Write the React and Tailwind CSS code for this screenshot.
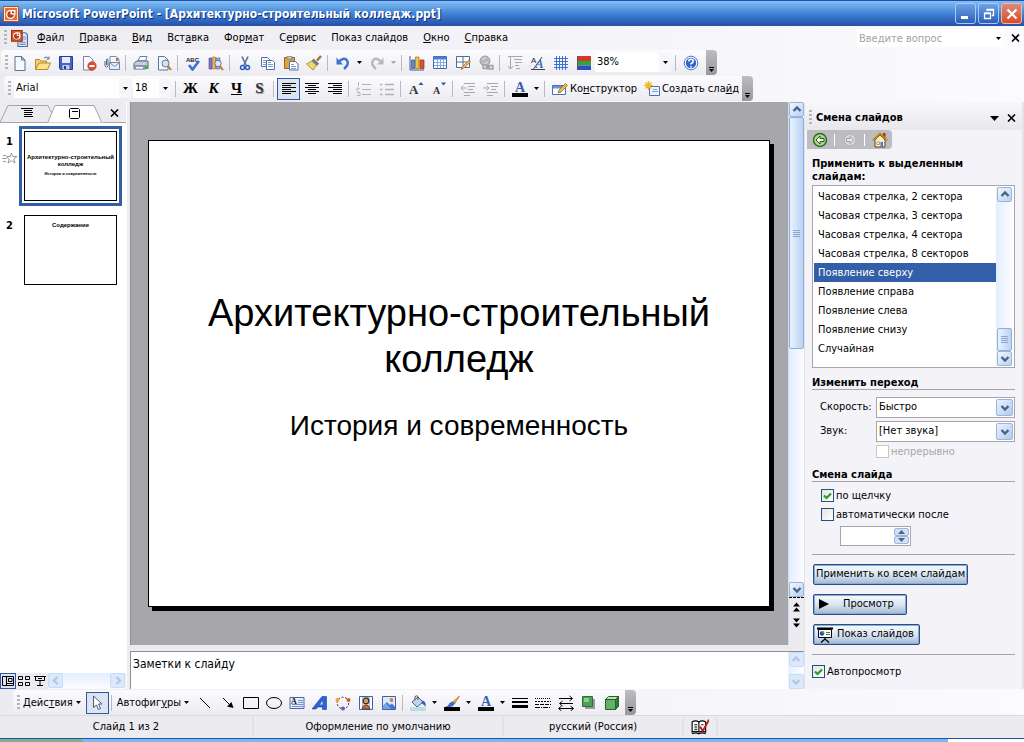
import { useState } from 'react'
import clsx from 'clsx'

const icons = {
  newDoc: (
    <>
      <path d="M3 1.5h6.5l3.5 3.5v10.5H3z" fill="#f4f8ff" stroke="#5b7396" />
      <path d="M9.5 1.5V5H13z" fill="#b9cbe8" stroke="#5b7396" />
    </>
  ),
  open: (
    <>
      <path d="M.5 14V4.500h4l1 1.500h6V14z" fill="#f5d26b" stroke="#b8862b" />
      <path d="M.5 14.500 4 8h11.500l-3 6.500z" fill="#ffe28c" stroke="#b8862b" />
      <path d="M9 3q2.500-2.500 4.500.5M14 1.500v2.500h-2.500" fill="none" stroke="#5a6f93" />
    </>
  ),
  save: (
    <>
      <path d="M1.500 1.500h13v13h-12l-1-1z" fill="#4a5fd0" stroke="#2a3a9a" />
      <path d="M4 2h8v6H4z" fill="#e8edff" />
      <path d="M4.500 10h7v4.500h-7z" fill="#c8cdda" />
      <path d="M6 11h2v3H6z" fill="#2a3a9a" />
    </>
  ),
  permission: (
    <>
      <path d="M2.500 1.500h6L12 5v10H2.500z" fill="#f8faff" stroke="#6f86a8" />
      <circle cx="11" cy="11" r="4.200" fill="#e0502c" stroke="#a82c14" strokeWidth=".6" />
      <path d="M8.500 10h5v2h-5z" fill="#fff" />
    </>
  ),
  mail: (
    <>
      <path d="M6 1.500h6L15 4v7H6z" fill="#f4f8ff" stroke="#7b8eb0" />
      <path d="M5.500 7.500h10v7h-10z" fill="#e6eefb" stroke="#7287ad" />
      <path d="m5.500 7.500 5 4 5-4" fill="none" stroke="#7287ad" />
      <path d="M12 3h2v3h-2z" fill="#e0603c" />
      <path d="M1 6v5q1.500 3 3 0V4.500q-1-1.500-1.500 0V10" fill="none" stroke="#55657f" />
    </>
  ),
  print: (
    <>
      <path d="M5 6 7 1.500h7L12.500 6z" fill="#fff" stroke="#6d7d9b" />
      <path d="M1 8.500 3.500 6H15v5l-2.500 3H1z" fill="#c4cede" stroke="#56657f" />
      <path d="M1 10h11.500v4H1z" fill="#8a98b0" />
      <path d="M12 10.500h3.500v3.500H12z" fill="#3fae49" />
      <path d="M3 12h7v1.500H3z" fill="#fff" />
    </>
  ),
  preview: (
    <>
      <path d="M2.500 1.500h6L12 5v10H2.500z" fill="#f8faff" stroke="#5b7396" />
      <circle cx="9.500" cy="8.500" r="3.500" fill="#cfe5f7" stroke="#64748c" />
      <path d="m12 11 3 4" stroke="#c57a32" strokeWidth="2" />
    </>
  ),
  spell: (
    <>
      <text x="1" y="7" fontSize="6" fontWeight="bold" fill="#222" fontFamily="Liberation Sans">ABC</text>
      <path d="m4 10 3.500 4.500L14 6" fill="none" stroke="#3c6fd6" strokeWidth="2.600" />
    </>
  ),
  research: (
    <>
      <path d="M1 3h3v11H1z" fill="#7f74c9" stroke="#4d4797" strokeWidth=".6" />
      <path d="M4.500 2h3v12h-3z" fill="#e8b84b" stroke="#9a762b" strokeWidth=".6" />
      <path d="M8 3h4v11H8z" fill="#b3a6dc" stroke="#5c5494" strokeWidth=".6" />
      <circle cx="10" cy="8.500" r="3.200" fill="#d5ebf9" stroke="#64748c" />
      <path d="m12 11 3 4" stroke="#c57a32" strokeWidth="2" />
    </>
  ),
  cut: (
    <>
      <path d="M5 1.500 9 10M11 1.500 7 10" stroke="#5d7296" strokeWidth="1.600" />
      <circle cx="5.500" cy="12.500" r="2" fill="none" stroke="#2d59b8" strokeWidth="1.500" />
      <circle cx="10.500" cy="12.500" r="2" fill="none" stroke="#2d59b8" strokeWidth="1.500" />
    </>
  ),
  copy: (
    <>
      <path d="M1.500 2.500h6l2 2v7h-8z" fill="#fff" stroke="#4f6fae" />
      <path d="M3 5.500h4M3 7.500h4M3 9.500h3" stroke="#7c9bd6" />
      <path d="M6.500 5.500h6l2 2v7h-8z" fill="#fff" stroke="#4f6fae" />
      <path d="M8 9.500h5M8 11.500h5M8 7.500h3" stroke="#7c9bd6" />
    </>
  ),
  paste: (
    <>
      <path d="M1.500 2.500h10v11h-10z" fill="#e0a23c" stroke="#976320" />
      <path d="M4 1.500h5v2.500H4z" fill="#c9cfdb" stroke="#666" strokeWidth=".6" />
      <path d="M6.500 6.500h6l2.500 2.500v6H6.500z" fill="#fff" stroke="#4f6fae" />
      <path d="M8 9.500h3M8 11.500h5M8 13.500h5" stroke="#7c9bd6" />
    </>
  ),
  painter: (
    <>
      <path d="m15 1-4 4.500" stroke="#a8703a" strokeWidth="2.500" />
      <path d="m7.500 3.500 5.500 5-2 2.500L5.500 6z" fill="#707a8a" />
      <path d="m5.500 6 5 4.500L7 15 .5 9z" fill="#f3d471" stroke="#b59433" />
    </>
  ),
  undo: (
    <>
      <path d="M4 6.500q5.500-5 8-1t-3 8.500" fill="none" stroke="#3d72d6" strokeWidth="2.400" />
      <path d="M1.500 2.500v7H8z" fill="#3d72d6" />
    </>
  ),
  redo: (
    <>
      <path d="M12 6.500q-5.500-5-8-1t3 8.500" fill="none" stroke="#b9b9bd" strokeWidth="2.400" />
      <path d="M14.500 2.500v7H8z" fill="#b9b9bd" />
    </>
  ),
  chart: (
    <>
      <path d="M1 1v14h14" fill="none" stroke="#44598c" />
      <path d="M2.500 5h3v8.500h-3z" fill="#5c8be0" stroke="#2b4c94" strokeWidth=".7" />
      <path d="M6.500 2h3.500v11.500H6.500z" fill="#f2c141" stroke="#9a7416" strokeWidth=".7" />
      <path d="M11 5h4v8.500h-4z" fill="#dc5432" stroke="#8e2a12" strokeWidth=".7" />
    </>
  ),
  table: (
    <>
      <path d="M1.500 1.500h13v12h-13z" fill="#fff" stroke="#3f66b0" />
      <path d="M1.500 1.500h13v3h-13z" fill="#4c7bd0" />
      <path d="M5.500 4v9M8.500 4v9M11.500 4v9M2 7.500h12M2 10.500h12" stroke="#86a8e0" />
    </>
  ),
  borders: (
    <>
      <path d="M1.500 1.500h13v11h-13z" fill="#fff" stroke="#506a9b" />
      <path d="M8 2v10M2 7h12" stroke="#506a9b" />
      <path d="m6 14.500 1.500-3L14 5l1.500 2L9 13z" fill="#f0bd4c" stroke="#94642a" strokeWidth=".7" />
    </>
  ),
  link: (
    <>
      <circle cx="7" cy="6" r="5" fill="#b8b8bd" stroke="#9d9da3" />
      <path d="M4 5q2-3 4-2M6 9l4-2" stroke="#e0e0e4" fill="none" />
      <path d="M5 10h4v3.500H5zM10 10.500h5v3.500h-5zM8 12h4" fill="#dcdce0" stroke="#a2a2a8" strokeWidth="1.400" />
    </>
  ),
  expand: (
    <path d="M3.500 1v13M1 11l2.500 3L6 11M1 1.500h14M6 1.500h9.500M7 4.500h8M8 7.500h7M8 10.500h4M9 13.500h4" fill="none" stroke="#a9a9ad" />
  ),
  aFormat: (
    <>
      <text x="1" y="8" fontSize="8" fill="#222" fontFamily="Liberation Sans">A</text>
      <path d="M3.500 14 12 2M1 14.500h14" stroke="#444" />
      <text x="5.500" y="13" fontSize="12" fontWeight="bold" fontStyle="italic" fill="#3b63c4" fontFamily="Liberation Serif">A</text>
    </>
  ),
  grid: <path d="M3.500 1v14M6.500 1v14M9.500 1v14M12.500 1v14M1 3.500h14M1 6.500h14M1 9.500h14M1 12.500h14" stroke="#3f6fd0" />,
  color: (
    <>
      <path d="M2 1h13v5H2z" fill="#d8352c" />
      <path d="M2 6h13v4.500H2z" fill="#2fa836" />
      <path d="M2 10.500h13V15H2z" fill="#2f4fc4" />
      <path d="M1.500 1v14" stroke="#555" />
    </>
  ),
  help: (
    <>
      <circle cx="8" cy="8" r="6.800" fill="#fff" stroke="#4a76cc" />
      <circle cx="8" cy="8" r="5.200" fill="#2f64cc" />
      <path d="M5.800 6.500q0-2.300 2.200-2.300t2.200 2q0 1.300-2.200 2.500v.8M8 11v1.500" fill="none" stroke="#fff" strokeWidth="1.600" />
    </>
  ),
  alignLeft: <path d="M1 2.500h14M1 4.500h9M1 6.500h14M1 8.500h9M1 10.500h14M1 12.500h9" stroke="#000" />,
  alignCenter: <path d="M1 2.500h14M4 4.500h8M1 6.500h14M4 8.500h8M1 10.500h14M4 12.500h8" stroke="#000" />,
  alignRight: <path d="M1 2.500h14M6 4.500h9M1 6.500h14M6 8.500h9M1 10.500h14M6 12.500h9" stroke="#000" />,
  numbering: <path d="M6 3.500h9M6 8.500h9M6 13.500h9M2.500 1v4M1 10.500V7h2v1.500M1 11.500h3v3H1" fill="none" stroke="#b3b3b7" />,
  bullets: <path d="M6 3.500h9M6 8.500h9M6 13.500h9M1 3.500h2.500M1 8.500h2.500M1 13.500h2.500" strokeWidth="1.400" stroke="#b3b3b7" />,
  grow: (
    <>
      <text x="1" y="13" fontSize="13" fontWeight="bold" fill="#333" fontFamily="Liberation Serif">A</text>
      <path d="m10.500 4 2.500-3 2.500 3z" fill="#2c55b8" />
    </>
  ),
  shrink: (
    <>
      <text x="2" y="13" fontSize="10" fontWeight="bold" fill="#333" fontFamily="Liberation Serif">A</text>
      <path d="m10 1.500 2.500 3 2.500-3z" fill="#2c55b8" />
    </>
  ),
  outdent: <path d="M4 2.500h11M8 5.500h7M8 8.500h5M4 11.500h11M4 14.500h6M7 7H1M3.500 4.500 1 7l2.500 2.500" fill="none" stroke="#a9a9ad" />,
  indent: <path d="M4 2.500h11M8 5.500h7M8 8.500h5M4 11.500h11M4 14.500h6M0 7h6M3.500 4.500 6 7 3.500 9.500" fill="none" stroke="#a9a9ad" />,
  fontColor: (
    <>
      <text x="3" y="11" fontSize="14" fontWeight="bold" fill="#3560ae" fontFamily="Liberation Serif">A</text>
      <path d="M0 12h16v4H0z" />
    </>
  ),
  design: (
    <>
      <path d="M.5 4.500h13v9H.5z" fill="#fff" stroke="#4f6fae" />
      <path d="M1 5h12v2.500H1z" fill="#6b93da" />
      <path d="m6 12 1-3 6.500-6.500 2 2L9 11z" fill="#f0bd4c" stroke="#7a5a2a" strokeWidth=".7" />
    </>
  ),
  newSlide: (
    <>
      <path d="M5.500 5.500h10v9h-10z" fill="#eef4ff" stroke="#4f6fae" />
      <path d="M9 8.500h4M8 10.500h6" stroke="#7c9bd6" />
      <path d="M4.500 0v9M0 4.500h9M1.500 1.500l6 6M7.500 1.500l-6 6" stroke="#eeb524" strokeWidth="1.400" />
    </>
  ),
  cursor: <path d="M4.500 1v11.500l3-2.500 2 4.500 2-1L9.500 9h3.500z" fill="#fff" stroke="#4a5d80" />,
  line: <path d="m3 3 10 10" stroke="#000" />,
  arrow: (
    <>
      <path d="m3 3 7 7" stroke="#000" />
      <path d="m13.500 13-2-6-4.500 4.500z" />
    </>
  ),
  rect: <path d="M.5 2.500h15v11H.5z" fill="none" stroke="#000" />,
  oval: <ellipse cx="8" cy="8" rx="7.500" ry="5.500" fill="none" stroke="#000" />,
  textBox: (
    <>
      <path d="M1 2.500h14v11H1z" fill="#e4eefc" stroke="#4a68a0" />
      <text x="2" y="9" fontSize="8" fontWeight="bold" fill="#111" fontFamily="Liberation Serif">A</text>
      <path d="M9 5.500h5M9 7.500h5M3 9.500h11M3 11.500h11" stroke="#7591c6" />
    </>
  ),
  wordArt: (
    <>
      <path d="m0 14 10-12.500h4.500v13h-4V12H6l-2 2z" fill="#2c62d2" stroke="#1d449a" strokeWidth=".6" />
      <path d="M8 9.500 10.500 6v3.500z" fill="#dfe9fb" />
    </>
  ),
  diagram: (
    <>
      <circle cx="8" cy="8" r="5.800" fill="none" stroke="#333" strokeDasharray="2 1.600" />
      <circle cx="2.500" cy="5" r="2" fill="#e7a92b" />
      <circle cx="13.500" cy="5" r="2" fill="#cc5b3a" />
      <circle cx="8" cy="13.500" r="2" fill="#5b5fd6" />
    </>
  ),
  clipArt: (
    <>
      <path d="M1.500 1.500h13v13h-13z" fill="#fff" stroke="#3d62ad" />
      <path d="M4.500 2.500h7v11h-7z" fill="#d9e4f5" stroke="#8a99b5" strokeWidth=".6" />
      <circle cx="8" cy="6" r="2.800" fill="#e09a5c" stroke="#33302e" strokeWidth="1.200" />
      <path d="M4 14q.5-4 4-4t4 4z" fill="#d46a24" stroke="#33302e" strokeWidth=".7" />
    </>
  ),
  picture: (
    <>
      <path d="M1.500 1.500h13v13h-13z" fill="#dceafc" stroke="#3d62ad" />
      <path d="m2 11 4-4 3 3 2-1.500 3 3.500v2H2z" fill="#4677c9" />
      <path d="m5 8 5 6H2v-3z" fill="#7ba4e2" />
      <circle cx="10.500" cy="5" r="1.900" fill="#e17a38" />
    </>
  ),
  fill: (
    <>
      <path d="m2 7 6-5 5 5-6 5z" fill="#c3d5f0" stroke="#4c5f86" />
      <path d="M12 5.500q4.500 1 3.500 6L11.500 8z" fill="#2f5fc0" />
      <path d="M5 5V1.500q2-1.500 3 0V5" fill="none" stroke="#555" />
      <path d="M0 12h16v4H0z" fill="#b7e0e2" />
    </>
  ),
  lineColor: (
    <>
      <path d="m15.500 1-7 6 2 2z" fill="#f0a838" stroke="#a86a1c" strokeWidth=".6" />
      <path d="M9 6.500q-3 0-5 4-1 1-3 1 5 1.500 8-.5l2-2.500z" fill="#3a6dd0" />
      <path d="M0 12h16v4H0z" />
    </>
  ),
  lineStyle: (
    <>
      <path d="M0 3.500h16" stroke="#000" />
      <path d="M0 7h16" stroke="#000" strokeWidth="2" />
      <path d="M0 11.500h16" stroke="#000" strokeWidth="3" />
    </>
  ),
  dashStyle: (
    <>
      <path d="M0 3.500h16" stroke="#000" strokeDasharray="1 1" />
      <path d="M0 6.500h16" stroke="#000" strokeDasharray="2 1" />
      <path d="M0 9.500h16" stroke="#000" strokeDasharray="4 1" />
      <path d="M0 12.500h16" stroke="#000" strokeDasharray="5 1 1 1" />
    </>
  ),
  arrowStyle: (
    <path d="M1 3.500h13M11.500 1l3 2.500-3 2.500M2 8.500h13M4.500 6l-3 2.500 3 2.500M1 13.500h14M3.500 11l-3 2.500 3 2.500M12.500 11l3 2.500-3 2.500" fill="none" stroke="#000" />
  ),
  shadow: (
    <>
      <path d="M4 4h10v10H4z" fill="#9a9a9a" />
      <path d="M1.500 1.500h10v10h-10z" fill="#4f9f55" stroke="#2c6e33" />
      <path d="M3 3h5v4H3z" fill="#8fce92" />
    </>
  ),
  cube: (
    <>
      <path d="M1.500 4.500h10v10h-10z" fill="#63b069" stroke="#24602b" />
      <path d="m1.500 4.500 3-3h10l-3 3z" fill="#b5e3b5" stroke="#24602b" />
      <path d="m11.500 4.500 3-3v10l-3 3z" fill="#2f7a38" stroke="#24602b" />
    </>
  ),
  app: (
    <>
      <path d="M.5.5h15v15H.5z" fill="#f7e9df" stroke="#c2491d" />
      <path d="M2 2h12v12H2z" fill="#e2703f" />
      <circle cx="7.500" cy="8.500" r="4.500" fill="#fff" />
      <circle cx="7.500" cy="8.500" r="3.200" fill="#b8401a" />
      <path d="M7.500 8.500V4h5v4.500z" fill="#fff" />
      <path d="M9 7.200V5q2.500 0 2.500 2.200z" fill="#c2491d" />
    </>
  ),
  docApp: (
    <>
      <path d="M6.500 2.500h7l2 2v11h-9z" fill="#dfe9fa" stroke="#4d69a4" />
      <path d="M11 6.500h3.500M11 8.500h3.500M8 11.500h6M8 13.500h6" stroke="#7391cc" />
      <path d="M.5.5h10v10H.5z" fill="#d9572a" stroke="#8f3312" />
      <circle cx="5.500" cy="5.500" r="3.500" fill="#fff" />
      <circle cx="5.200" cy="5.800" r="2.400" fill="#b8401a" />
      <path d="M5.500 5.500V2.500h3v3z" fill="#fff" />
      <path d="M6.300 4.700V3.300q1.500 0 1.500 1.400z" fill="#b8401a" />
    </>
  ),
  back: (
    <>
      <circle cx="8" cy="8" r="6.500" fill="#a5dc84" stroke="#2a6b22" strokeWidth="1.400" />
      <path d="M8 4 4 8l4 4V9.500h4v-3H8z" fill="#fff" stroke="#1d4417" strokeWidth=".9" />
    </>
  ),
  forward: (
    <>
      <circle cx="8" cy="8" r="6" fill="#d7d7da" stroke="#b0b0b5" />
      <path d="m8 4.500 3.500 3.500L8 11.500V9.500H4.500v-3H8z" fill="#e6e6e8" stroke="#98989d" strokeWidth=".9" />
    </>
  ),
  home: (
    <>
      <path d="M11 1h2.500v5H11z" fill="#a8331c" />
      <path d="M3 8v7h10V8L8 3z" fill="#f6ecc8" stroke="#5c4a22" />
      <path d="M1 8.500 8 1.500l7 7" fill="none" stroke="#b98a1e" strokeWidth="2" />
      <path d="M8.500 10h2.500v5H8.500z" fill="#4b7cc9" />
      <path d="M5 10h2.500v2.500H5z" fill="#fff" stroke="#80693a" strokeWidth=".6" />
    </>
  ),
  show: (
    <>
      <path d="M0 1.500h16" stroke="#000" strokeWidth="2" />
      <path d="M1.500 2.500h13v8h-13z" fill="#fff" stroke="#000" />
      <circle cx="5" cy="6.500" r="2.200" fill="#2a3fd0" />
      <path d="M5 6.500V4q2.500 0 2.500 2.500z" fill="#2fa836" />
      <path d="M9 5.500h4M9 7.500h4" stroke="#666" />
      <path d="M8 10.500v2M8 12l-4 3.500M8 12l4 3.500" stroke="#000" strokeWidth="1.300" />
    </>
  ),
  book: (
    <>
      <path d="M1 3.500q3-2 6 0 3-2 6 0v9q-3-1.500-6 0-3-1.500-6 0z" fill="#fff" stroke="#000" />
      <path d="M1 14q3-1.500 6 0 3-1.500 6 0M7 3.500v9M3 6h2.500M3 8h2.500M3 10h2.500M9 6h2" fill="none" stroke="#000" />
      <path d="m8 7.500 2.500 4L16 1.500" fill="none" stroke="#b3201c" strokeWidth="1.700" />
    </>
  ),
  outlineTab: <path d="M1 1.500h12M4 3.500h8M4 5.500h9M4 7.500h8M4 9.500h9" stroke="#000" />,
  slidesTab: <path d="M3.500 2.500h8l1 1v8l-1 1h-8l-1-1v-8zM5 5.500h6" fill="none" stroke="#000" />,
  normalView: <path d="M1.500 2.500h11v9h-11zM5.500 2.500v9M7.500 4.500h3.500v3H7.500zM5.500 9.500h7" fill="none" stroke="#000" />,
  sorterView: <path d="M2.500 3.500h4v3h-4zM9.500 3.500h4v3h-4zM2.500 9.500h4v3h-4zM9.500 9.500h4v3h-4z" fill="none" stroke="#000" />,
  showView: <path d="M2 3.500h12M3.500 3.500v4h9v-4M8 8v4M5 12.500h6M6 5.500h4" fill="none" stroke="#000" />,
  star: <path d="m9.500 3 1.200 3.500H15l-3.200 2.500 1.200 4-3.500-2.300L6 13l1.200-4L4.500 6.500h3.800zM1 5.500h3M0 8.500h5M1 11.500h3" fill="none" stroke="#9a9a9e" />,
}

function Icon({ name, size = 16 }) {
  return (
    <svg width={size} height={size} viewBox={`0 0 ${Math.min(size, 16)} ${Math.min(size, 16)}`} className="shrink-0" aria-hidden="true">
      {icons[name]}
    </svg>
  )
}

function Caret({ disabled }) {
  return (
    <svg width="5" height="3" viewBox="0 0 5 3" className="shrink-0" aria-hidden="true">
      <path d="M0 0h5L2.500 3z" fill={disabled ? '#a9a9ad' : '#000'} />
    </svg>
  )
}

function Chevron({ dir = 'down', faint }) {
  const paths = {
    up: 'M1.500 6 5 2.500 8.500 6',
    down: 'M1.500 3 5 6.500 8.500 3',
    left: 'M6.500 1 3 4.500 6.500 8',
    right: 'M3.500 1 7 4.500 3.500 8',
  }
  return (
    <svg width="10" height="9" viewBox="0 0 10 9" className="shrink-0" aria-hidden="true">
      <path d={paths[dir]} fill="none" stroke={faint ? '#b4c6e2' : '#4d6185'} strokeWidth="2.400" />
    </svg>
  )
}

function Grip() {
  return <div className="ml-1 h-4 w-[3px] shrink-0 bg-[repeating-linear-gradient(#b5b5ba_0_2px,transparent_2px_4px)]" />
}

function Sep() {
  return <div className="mr-[3px] ml-[2px] h-4 w-px shrink-0 bg-[#b9b9be]" />
}

function Tool({ icon, label, active, children }) {
  return (
    <button
      type="button"
      aria-label={label}
      className={clsx(
        'flex h-[22px] w-[23px] shrink-0 items-center justify-center',
        active && 'border border-[#3159a3] bg-[#dce3f1]',
      )}
    >
      {icon ? <Icon name={icon} /> : children}
    </button>
  )
}

function ArrowButton({ label, disabled }) {
  return (
    <button type="button" aria-label={label} disabled={disabled} className="flex h-[22px] w-[11px] shrink-0 items-center justify-center">
      <Caret disabled={disabled} />
    </button>
  )
}

function EndCap({ label }) {
  return (
    <button
      type="button"
      aria-label={label}
      className="flex w-[11px] shrink-0 flex-col items-center justify-end gap-px self-stretch rounded-r bg-linear-to-b from-[#bdbdc1] to-[#97979c] pb-[3px]"
    >
      <span className="h-px w-[5px] bg-black" />
      <Caret />
    </button>
  )
}

function ToolbarSelect({ label, value, className }) {
  return (
    <div className={clsx('grid h-[19px] items-center bg-white', className)}>
      <select aria-label={label} defaultValue={value} className="col-start-1 row-start-1 h-full w-full appearance-none pl-[2px] outline-none">
        <option>{value}</option>
      </select>
      <span className="pointer-events-none col-start-1 row-start-1 flex h-full w-3 items-center justify-center justify-self-end bg-[#f6f5f8]">
        <Caret />
      </span>
    </div>
  )
}

const menus = [
  ['', 'Ф', 'айл'],
  ['', 'П', 'равка'],
  ['', 'В', 'ид'],
  ['Вст', 'а', 'вка'],
  ['Фор', 'м', 'ат'],
  ['С', 'е', 'рвис'],
  ['Показ слай', 'д', 'ов'],
  ['', 'О', 'кно'],
  ['', 'С', 'правка'],
]

const captionButton = 'flex h-[21px] w-[21px] items-center justify-center rounded-[3px] border'

function TitleBar() {
  return (
    <header className="flex h-[26px] shrink-0 items-center border-t border-[#1d4fae] bg-linear-to-b from-[#84bff2] via-[#3f83d6] to-[#274fa8] pr-[2px] pl-[3px]">
      <Icon name="app" />
      <h1 className="ml-[3px] text-[12px] leading-4 font-bold text-white [text-shadow:1px_1px_0_#0f2f7c]">
        Microsoft PowerPoint - [Архитектурно-строительный колледж.ppt]
      </h1>
      <div className="ml-auto flex gap-[2px]">
        <button type="button" aria-label="Свернуть" className={clsx(captionButton, 'border-[#a9cbf1] bg-linear-to-b from-[#6ba3e4] to-[#2c5fb8]')}>
          <svg width="12" height="12" viewBox="0 0 12 12" aria-hidden="true">
            <path d="M1 8h7v3H1z" fill="#fff" />
          </svg>
        </button>
        <button type="button" aria-label="Восстановить" className={clsx(captionButton, 'border-[#a9cbf1] bg-linear-to-b from-[#6ba3e4] to-[#2c5fb8]')}>
          <svg width="12" height="12" viewBox="0 0 12 12" aria-hidden="true">
            <path d="M4 3V1.500h6.500v6H9M1.500 5.500h6v5h-6zM4 2h6.500M1.500 5h6" fill="none" stroke="#fff" strokeWidth="1.300" />
          </svg>
        </button>
        <button type="button" aria-label="Закрыть" className={clsx(captionButton, 'border-[#f0b8a8] bg-linear-to-b from-[#d98a78] to-[#d94a22]')}>
          <svg width="12" height="12" viewBox="0 0 12 12" aria-hidden="true">
            <path d="m1.500 1.500 9 9M10.500 1.500l-9 9" stroke="#fff" strokeWidth="2.200" />
          </svg>
        </button>
      </div>
    </header>
  )
}

function CloseX() {
  return (
    <svg width="9" height="8" viewBox="0 0 9 8" aria-hidden="true">
      <path d="m1 .5 7 7M8 .5l-7 7" stroke="#000" strokeWidth="1.600" />
    </svg>
  )
}

function MenuBar() {
  return (
    <nav className="flex h-6 shrink-0 items-center pr-px">
      <Grip />
      <span className="ml-1 flex">
        <Icon name="docApp" size={17} />
      </span>
      <div className="ml-[2px] flex gap-px">
        {menus.map(([before, key, after]) => (
          <button key={before + key + after} type="button" className="px-[7px] leading-5">
            {before}
            <u>{key}</u>
            {after}
          </button>
        ))}
      </div>
      <div className="ml-auto flex h-[18px] w-[147px] items-center bg-white">
        <input aria-label="Введите вопрос" placeholder="Введите вопрос" className="h-full w-full min-w-0 pl-[2px] outline-none placeholder:text-[#a3a3a8]" />
        <ArrowButton label="Список вопросов" />
      </div>
      <button type="button" aria-label="Закрыть окно" className="ml-[3px] flex h-4 w-4 items-center justify-center">
        <CloseX />
      </button>
    </nav>
  )
}

const barStyle = 'flex h-[25px] w-fit shrink-0 items-center rounded bg-linear-to-b from-[#fcfbfe] to-[#ecebf0]'

function StandardBar() {
  return (
    <div className={barStyle}>
      <Grip />
      <Tool icon="newDoc" label="Создать" />
      <Tool icon="open" label="Открыть" />
      <Tool icon="save" label="Сохранить" />
      <Tool icon="permission" label="Разрешения" />
      <Tool icon="mail" label="Сообщение" />
      <Sep />
      <Tool icon="print" label="Печать" />
      <Tool icon="preview" label="Просмотр" />
      <Sep />
      <Tool icon="spell" label="Орфография" />
      <Tool icon="research" label="Справочные материалы" />
      <Sep />
      <Tool icon="cut" label="Вырезать" />
      <Tool icon="copy" label="Копировать" />
      <Tool icon="paste" label="Вставить" />
      <Tool icon="painter" label="Формат по образцу" />
      <Sep />
      <Tool icon="undo" label="Отменить" />
      <ArrowButton label="Список отмены" />
      <Tool icon="redo" label="Вернуть" />
      <ArrowButton label="Список возврата" disabled />
      <Sep />
      <Tool icon="chart" label="Диаграмма" />
      <Tool icon="table" label="Таблица" />
      <Tool icon="borders" label="Границы" />
      <Tool icon="link" label="Гиперссылка" />
      <Sep />
      <Tool icon="expand" label="Развернуть все" />
      <Tool icon="aFormat" label="Показать форматирование" />
      <Tool icon="grid" label="Сетка" />
      <Tool icon="color" label="Цвет" />
      <ToolbarSelect label="Масштаб" value="38%" className="mr-[2px] w-[76px]" />
      <Sep />
      <Tool icon="help" label="Справка" />
      <span className="w-1" />
      <EndCap label="Параметры панели Стандартная" />
    </div>
  )
}

function FormatBar() {
  return (
    <div className={clsx(barStyle, 'ml-[3px]')}>
      <Grip />
      <ToolbarSelect label="Шрифт" value="Arial" className="ml-[3px] w-[117px]" />
      <ToolbarSelect label="Размер" value="18" className="mr-[2px] ml-[2px] w-[38px]" />
      <Sep />
      <Tool label="Полужирный"><b className="font-['Liberation_Serif'] text-[15px]">Ж</b></Tool>
      <Tool label="Курсив"><b className="font-['Liberation_Serif'] text-[15px] italic">К</b></Tool>
      <Tool label="Подчеркнутый"><b className="font-['Liberation_Serif'] text-[15px] underline">Ч</b></Tool>
      <Tool label="Тень текста"><b className="font-['Liberation_Serif'] text-[15px] text-[#333] [text-shadow:1px_1px_1px_#888]">S</b></Tool>
      <Sep />
      <Tool icon="alignLeft" label="По левому краю" active />
      <Tool icon="alignCenter" label="По центру" />
      <Tool icon="alignRight" label="По правому краю" />
      <Sep />
      <Tool icon="numbering" label="Нумерация" />
      <Tool icon="bullets" label="Маркеры" />
      <Sep />
      <Tool icon="grow" label="Увеличить размер шрифта" />
      <Tool icon="shrink" label="Уменьшить размер шрифта" />
      <Sep />
      <Tool icon="outdent" label="Уменьшить отступ" />
      <Tool icon="indent" label="Увеличить отступ" />
      <Sep />
      <Tool icon="fontColor" label="Цвет текста" />
      <ArrowButton label="Список цветов текста" />
      <Sep />
      <button type="button" className="flex items-center gap-[2px] px-1 leading-5 whitespace-nowrap">
        <Icon name="design" />
        <span>Ко<u>н</u>структор</span>
      </button>
      <button type="button" className="flex items-center gap-[2px] px-[3px] leading-5 whitespace-nowrap">
        <Icon name="newSlide" />
        <span>Создать сла<u>й</u>д</span>
      </button>
      <EndCap label="Параметры панели Форматирование" />
    </div>
  )
}

const slides = [
  { title: 'Архитектурно-строительный колледж', subtitle: 'История и современность', animated: true },
  { title: 'Содержание' },
]

function SlideList({ current, onSelect }) {
  return (
    <aside className="flex w-[126px] shrink-0 flex-col">
      <div className="flex h-[21px] shrink-0 items-end">
        <div className="grid grow" role="tablist">
          <svg width="103" height="19" viewBox="0 0 103 19" className="col-start-1 row-start-1" aria-hidden="true">
            <path d="M0 18.500 8 1.500h40l4 8-4 9z" fill="#ecebf0" stroke="#a5a5aa" />
            <path d="M47.500 19 55 1.500h39l8 17.500z" fill="#fff" stroke="#a5a5aa" />
          </svg>
          <div className="z-10 col-start-1 row-start-1 flex">
            <button type="button" role="tab" aria-selected="false" aria-label="Структура" className="flex w-[54px] items-center justify-center">
              <Icon name="outlineTab" size={14} />
            </button>
            <button type="button" role="tab" aria-selected="true" aria-label="Слайды" className="flex w-[41px] items-center justify-center">
              <Icon name="slidesTab" size={15} />
            </button>
          </div>
        </div>
        <button type="button" aria-label="Закрыть область" className="flex h-[19px] w-6 items-center justify-center border-b border-[#a5a5aa]">
          <CloseX />
        </button>
      </div>
      <ol className="flex grow flex-col gap-1 bg-white pt-[3px]">
        {slides.map((s, i) => (
          <li key={s.title} className="flex">
            <div className="flex w-[19px] shrink-0 flex-col items-center pt-2 leading-4 font-bold">
              {i + 1}
              {s.animated && <Icon name="star" />}
            </div>
            <button
              type="button"
              onClick={() => onSelect(i)}
              className={clsx('mr-1 grow border-[3px] p-[2px]', i === current ? 'border-[#335ea8]' : 'border-transparent')}
            >
              <span className="flex aspect-[4/3] w-full flex-col items-center border border-black bg-white text-center font-['Liberation_Sans'] font-bold">
                {s.subtitle ? (
                  <>
                    <span className="pt-[22px] text-[6px] leading-[7px]">{s.title}</span>
                    <span className="pt-[3px] text-[4px] leading-[6px]">{s.subtitle}</span>
                  </>
                ) : (
                  <span className="pt-[6px] text-[6px] leading-[7px]">{s.title}</span>
                )}
              </span>
            </button>
          </li>
        ))}
      </ol>
      <div className="flex h-4 shrink-0 items-center">
        <button type="button" aria-label="Обычный режим" className="flex h-4 w-4 items-center justify-center border border-[#3159a3] bg-[#dce3f1]">
          <Icon name="normalView" size={14} />
        </button>
        <button type="button" aria-label="Сортировщик" className="flex h-4 w-4 items-center justify-center"><Icon name="sorterView" /></button>
        <button type="button" aria-label="Показ" className="flex h-4 w-4 items-center justify-center"><Icon name="showView" /></button>
        <div className="mr-px flex h-full grow justify-between bg-linear-to-b from-[#e4efff] to-[#fbfcff]">
          <ScrollButton dir="left" faint label="Влево" />
          <ScrollButton dir="right" faint label="Вправо" />
        </div>
      </div>
    </aside>
  )
}

function ScrollButton({ dir, faint, label }) {
  return (
    <button
      type="button"
      aria-label={label}
      className={clsx(
        'flex h-[15px] w-[15px] shrink-0 items-center justify-center rounded-[2px] border',
        faint ? 'border-[#c9dcf6] bg-[#dbe9fd]' : 'border-[#9db5d9] bg-linear-to-br from-[#f2f8ff] to-[#b8d0f3]',
      )}
    >
      <Chevron dir={dir} faint={faint} />
    </button>
  )
}

function Ridges() {
  return <span className="h-[7px] w-[7px] bg-[repeating-linear-gradient(#8ea5cb_0_1px,transparent_1px_2px)]" />
}

function Workspace({ slide }) {
  return (
    <section className="flex min-w-0 grow flex-col">
      <div className="flex grow">
        <div className="flex min-w-0 grow items-center border-l border-[#8f8f94] bg-[#a7a6ab] pr-[18px] pl-[17px]">
          <article className="flex aspect-[4/3] w-full flex-col items-center border border-black bg-white px-10 pt-[149px] text-center font-['Liberation_Sans'] text-black shadow-[4px_4px_0_#000]">
            <h2 className={clsx('text-[38px] leading-[46px]', !slide.subtitle && '-mt-28')}>{slide.title}</h2>
            <p className="mt-[27px] text-[28px] leading-[34px]">{slide.subtitle}</p>
          </article>
        </div>
        <div className="flex w-4 flex-col items-center border-l border-[#cddff8] bg-linear-to-r from-[#e2eeff] to-[#fdfdff]">
          <ScrollButton dir="up" label="Вверх" />
          <div className="flex h-[232px] w-full shrink-0 items-center justify-center rounded-[2px] border border-[#94add2] bg-linear-to-r from-[#eaf3ff] to-[#b9d2f4]">
            <Ridges />
          </div>
          <div className="grow" />
          <ScrollButton dir="down" label="Вниз" />
          <div className="flex h-12 w-full shrink-0 flex-col items-center gap-[6px] border-t border-dashed border-black bg-[#ecebf0] pt-1">
            <button type="button" aria-label="Предыдущий слайд" className="h-[10px]">
              <svg width="9" height="10" viewBox="0 0 9 10" aria-hidden="true"><path d="m1 4.500 3.500-4 3.500 4zM1 9.500l3.500-4 3.500 4z" /></svg>
            </button>
            <button type="button" aria-label="Следующий слайд" className="h-[10px]">
              <svg width="9" height="10" viewBox="0 0 9 10" aria-hidden="true"><path d="m1 .5 3.500 4L8 .5zM1 5.500l3.500 4 3.500-4z" /></svg>
            </button>
          </div>
        </div>
      </div>
      <div className="mt-[6px] flex h-[38px] shrink-0 border-t border-l border-[#8f8f94] bg-white">
        <textarea aria-label="Заметки" defaultValue="Заметки к слайду" className="min-w-0 grow resize-none px-[2px] py-[4px] text-[12px] leading-4 outline-none" />
        <div className="flex w-4 flex-col items-center justify-between bg-linear-to-r from-[#e8f1ff] to-[#fdfdff]">
          <ScrollButton dir="up" faint label="Заметки вверх" />
          <ScrollButton dir="down" faint label="Заметки вниз" />
        </div>
      </div>
    </section>
  )
}

const transitions = [
  'Часовая стрелка, 2 сектора',
  'Часовая стрелка, 3 сектора',
  'Часовая стрелка, 4 сектора',
  'Часовая стрелка, 8 секторов',
  'Появление сверху',
  'Появление справа',
  'Появление слева',
  'Появление снизу',
  'Случайная',
]

function Check({ label, checked, disabled, className }) {
  const [on, setOn] = useState(Boolean(checked))
  return (
    <label className={clsx('flex items-center gap-[2px] leading-[19px]', disabled && 'text-[#a7a6ab]', className)}>
      <span className="grid place-items-center">
        <input
          type="checkbox"
          checked={on}
          disabled={disabled}
          onChange={(e) => setOn(e.target.checked)}
          className="col-start-1 row-start-1 h-[13px] w-[13px] appearance-none border border-[#1d5281] bg-linear-to-br from-[#e4e3de] to-white disabled:border-[#cac8bb] disabled:from-white"
        />
        {on && (
          <svg width="9" height="8" viewBox="0 0 9 8" className="pointer-events-none col-start-1 row-start-1" aria-hidden="true">
            <path d="M1 3.500 3.500 6 8 1.500" fill="none" stroke="#21a121" strokeWidth="2.200" />
          </svg>
        )}
      </span>
      {label}
    </label>
  )
}

function PaneSelect({ id, label, value }) {
  return (
    <div className="flex items-center pl-2">
      <label htmlFor={id} className="w-14 shrink-0">{label}</label>
      <div className="grid h-[21px] grow items-center border border-[#a7a6ab] bg-white">
        <select id={id} defaultValue={value} className="col-start-1 row-start-1 h-full w-full appearance-none pl-[2px] outline-none">
          <option>{value}</option>
        </select>
        <span className="pointer-events-none col-start-1 row-start-1 mr-px flex h-[17px] w-[17px] items-center justify-center justify-self-end rounded-[2px] border border-[#9db5d9] bg-linear-to-br from-[#eaf3ff] to-[#b0caf0]">
          <Chevron />
        </span>
      </div>
    </div>
  )
}

const buttonStyle =
  'flex h-[21px] w-fit items-center rounded-[2px] border border-[#24508f] bg-linear-to-b from-[#f6fafe] via-[#dbe5f2] to-[#a3b7d4] whitespace-nowrap shadow-[inset_0_0_0_1px_#8fa9cd]'

function TaskPane() {
  const [picked, setPicked] = useState(4)
  return (
    <aside className="flex w-[220px] shrink-0 flex-col border-r-2 border-l border-[#e4e3e8] bg-[#f4f4f8]">
      <div className="flex h-7 shrink-0 items-center bg-linear-to-b from-[#f8f7fa] to-[#e8e7ec] pt-1 pr-[2px]">
        <Grip />
        <h2 className="ml-1 font-bold">Смена слайдов</h2>
        <button type="button" aria-label="Другие области задач" className="ml-auto flex w-4 justify-center">
          <svg width="9" height="5" viewBox="0 0 9 5" aria-hidden="true"><path d="M0 0h9L4.500 5z" /></svg>
        </button>
        <button type="button" aria-label="Закрыть область задач" className="flex w-[18px] justify-center"><CloseX /></button>
      </div>
      <div className="ml-[2px] flex h-[19px] w-fit shrink-0 items-center rounded-r bg-[#bdbdc1] px-px">
        <Tool icon="back" label="Назад" />
        <span className="mx-[3px] h-3 w-px bg-white" />
        <Tool icon="forward" label="Вперед" />
        <span className="mx-[3px] h-3 w-px bg-white" />
        <Tool icon="home" label="Домой" />
      </div>
      <div className="flex flex-col pt-2 pr-[7px] pl-[7px]">
        <h3 id="apply-to" className="pr-10 leading-[13px] font-bold">Применить к выделенным слайдам:</h3>
        <div className="mt-[2px] flex h-[183px] border border-[#a7a6ab] bg-white p-px">
          <ul role="listbox" aria-labelledby="apply-to" className="grow overflow-hidden">
            {transitions.map((t, i) => (
              <li
                key={t}
                role="option"
                aria-selected={i === picked}
                onClick={() => setPicked(i)}
                className={clsx('cursor-default pl-1 leading-[19px] whitespace-nowrap', i === picked && 'bg-[#335ea8] text-white')}
              >
                {t}
              </li>
            ))}
          </ul>
          <div className="flex w-[17px] shrink-0 flex-col items-center bg-linear-to-r from-[#e2eeff] to-[#fdfdff]">
            <ScrollButton dir="up" label="Список вверх" />
            <div className="grow" />
            <div className="flex h-[23px] w-[15px] items-center justify-center rounded-[2px] border border-[#94add2] bg-linear-to-r from-[#eaf3ff] to-[#b9d2f4]">
              <Ridges />
            </div>
            <ScrollButton dir="down" label="Список вниз" />
          </div>
        </div>
        <h3 className="mt-2 border-b border-[#a7a6ab] leading-[13px] font-bold">Изменить переход</h3>
        <div className="mt-[7px] flex flex-col gap-[3px]">
          <PaneSelect id="speed" label="Скорость:" value="Быстро" />
          <PaneSelect id="sound" label="Звук:" value="[Нет звука]" />
        </div>
        <Check label="непрерывно" disabled className="pl-16" />
        <h3 className="mt-[7px] border-b border-[#a7a6ab] leading-[13px] font-bold">Смена слайда</h3>
        <div className="mt-1 pl-[9px]">
          <Check label="по щелчку" checked />
          <Check label="автоматически после" />
        </div>
        <div className="mt-[2px] ml-7 flex h-5 w-[71px] items-center border border-[#a7a6ab] bg-white">
          <input aria-label="Время" className="w-0 grow pl-1 outline-none" />
          <div className="mr-px flex flex-col">
            <button type="button" aria-label="Больше" className="flex h-2 w-[15px] items-center justify-center rounded-[2px] border border-[#9db5d9] bg-[#cfe0f8]">
              <svg width="7" height="4" viewBox="0 0 7 4" aria-hidden="true"><path d="M0 4 3.500 0 7 4z" fill="#4d6185" /></svg>
            </button>
            <button type="button" aria-label="Меньше" className="flex h-2 w-[15px] items-center justify-center rounded-[2px] border border-[#9db5d9] bg-[#cfe0f8]">
              <svg width="7" height="4" viewBox="0 0 7 4" aria-hidden="true"><path d="M0 0h7L3.500 4z" fill="#4d6185" /></svg>
            </button>
          </div>
        </div>
        <hr className="mt-2 border-[#a7a6ab]" />
        <div className="mt-[9px] flex flex-col gap-[9px] pl-px">
          <button type="button" className={clsx(buttonStyle, 'px-[2px]')}>Применить ко всем слайдам</button>
          <button type="button" className={clsx(buttonStyle, 'gap-3 pr-3 pl-1')}>
            <svg width="13" height="12" viewBox="0 0 13 12" aria-hidden="true"><path d="m1 0 10 5-10 5z" /></svg>
            Просмотр
          </button>
          <button type="button" className={clsx(buttonStyle, 'gap-1 pr-[5px] pl-[3px]')}>
            <Icon name="show" />
            Показ слайдов
          </button>
        </div>
        <hr className="mt-[9px] border-[#a7a6ab]" />
        <Check label="Автопросмотр" checked className="mt-[7px]" />
      </div>
    </aside>
  )
}

function DrawingBar() {
  return (
    <div className="flex shrink-0 bg-linear-to-r from-[#ecebf0] to-[#fbfafd] pt-px pl-[13px]">
      <div className={barStyle}>
        <Grip />
        <button type="button" className="flex items-center gap-[3px] px-[3px] leading-5 whitespace-nowrap">
          <span>Дейс<u>т</u>вия</span>
          <Caret />
        </button>
        <span className="w-[2px]" />
        <Tool icon="cursor" label="Выбор объектов" active />
        <Sep />
        <button type="button" className="flex items-center gap-[3px] px-[2px] leading-5 whitespace-nowrap">
          <span>Автофиг<u>у</u>ры</span>
          <Caret />
        </button>
        <span className="w-[2px]" />
        <Tool icon="line" label="Линия" />
        <Tool icon="arrow" label="Стрелка" />
        <Tool icon="rect" label="Прямоугольник" />
        <Tool icon="oval" label="Овал" />
        <Tool icon="textBox" label="Надпись" />
        <Tool icon="wordArt" label="Объект WordArt" />
        <Tool icon="diagram" label="Организационная диаграмма" />
        <Tool icon="clipArt" label="Картинка" />
        <Tool icon="picture" label="Рисунок" />
        <Sep />
        <Tool icon="fill" label="Цвет заливки" />
        <ArrowButton label="Список заливок" />
        <Tool icon="lineColor" label="Цвет линий" />
        <ArrowButton label="Список цветов линий" />
        <Tool icon="fontColor" label="Цвет шрифта" />
        <ArrowButton label="Список цветов шрифта" />
        <Tool icon="lineStyle" label="Тип линии" />
        <Tool icon="dashStyle" label="Тип штриха" />
        <Tool icon="arrowStyle" label="Вид стрелки" />
        <Tool icon="shadow" label="Стиль тени" />
        <Tool icon="cube" label="Объем" />
        <span className="w-[2px]" />
        <EndCap label="Параметры панели Рисование" />
      </div>
    </div>
  )
}

function StatusBar() {
  return (
    <footer className="flex h-[23px] shrink-0 items-center border-t border-[#d5dbe6] bg-[#ecebf0] text-center leading-5">
      <span className="w-[252px]">Слайд 1 из 2</span>
      <span className="w-[250px] border-l-2 border-[#e2e1e6]">Оформление по умолчанию</span>
      <span className="w-[180px] border-l-2 border-[#e2e1e6]">русский (Россия)</span>
      <span className="flex w-9 justify-center border-x-2 border-[#e2e1e6]"><Icon name="book" size={18} /></span>
    </footer>
  )
}

export default function App() {
  const [current, setCurrent] = useState(0)
  return (
    <div className="flex min-h-screen flex-col bg-linear-to-r from-[#ecebf0] to-[#fbfafd] font-['DejaVu_Sans_Condensed','Noto_Sans',sans-serif] text-[11px] text-black">
      <TitleBar />
      <MenuBar />
      <div className="flex flex-col gap-px pb-px pl-px">
        <StandardBar />
        <FormatBar />
      </div>
      <main className="flex grow bg-[#ecebf0]">
        <SlideList current={current} onSelect={setCurrent} />
        <div className="w-1 shrink-0 border-l border-white" />
        <Workspace slide={slides[current]} />
        <TaskPane />
      </main>
      <DrawingBar />
      <StatusBar />
      <div className="flex h-1 shrink-0 border-t border-[#2150b0] bg-[#7db8ec]">
        <div className="w-[83px] rounded-tr bg-[#7fb08a]" />
        <div className="ml-auto w-[76px] bg-white" />
      </div>
    </div>
  )
}
